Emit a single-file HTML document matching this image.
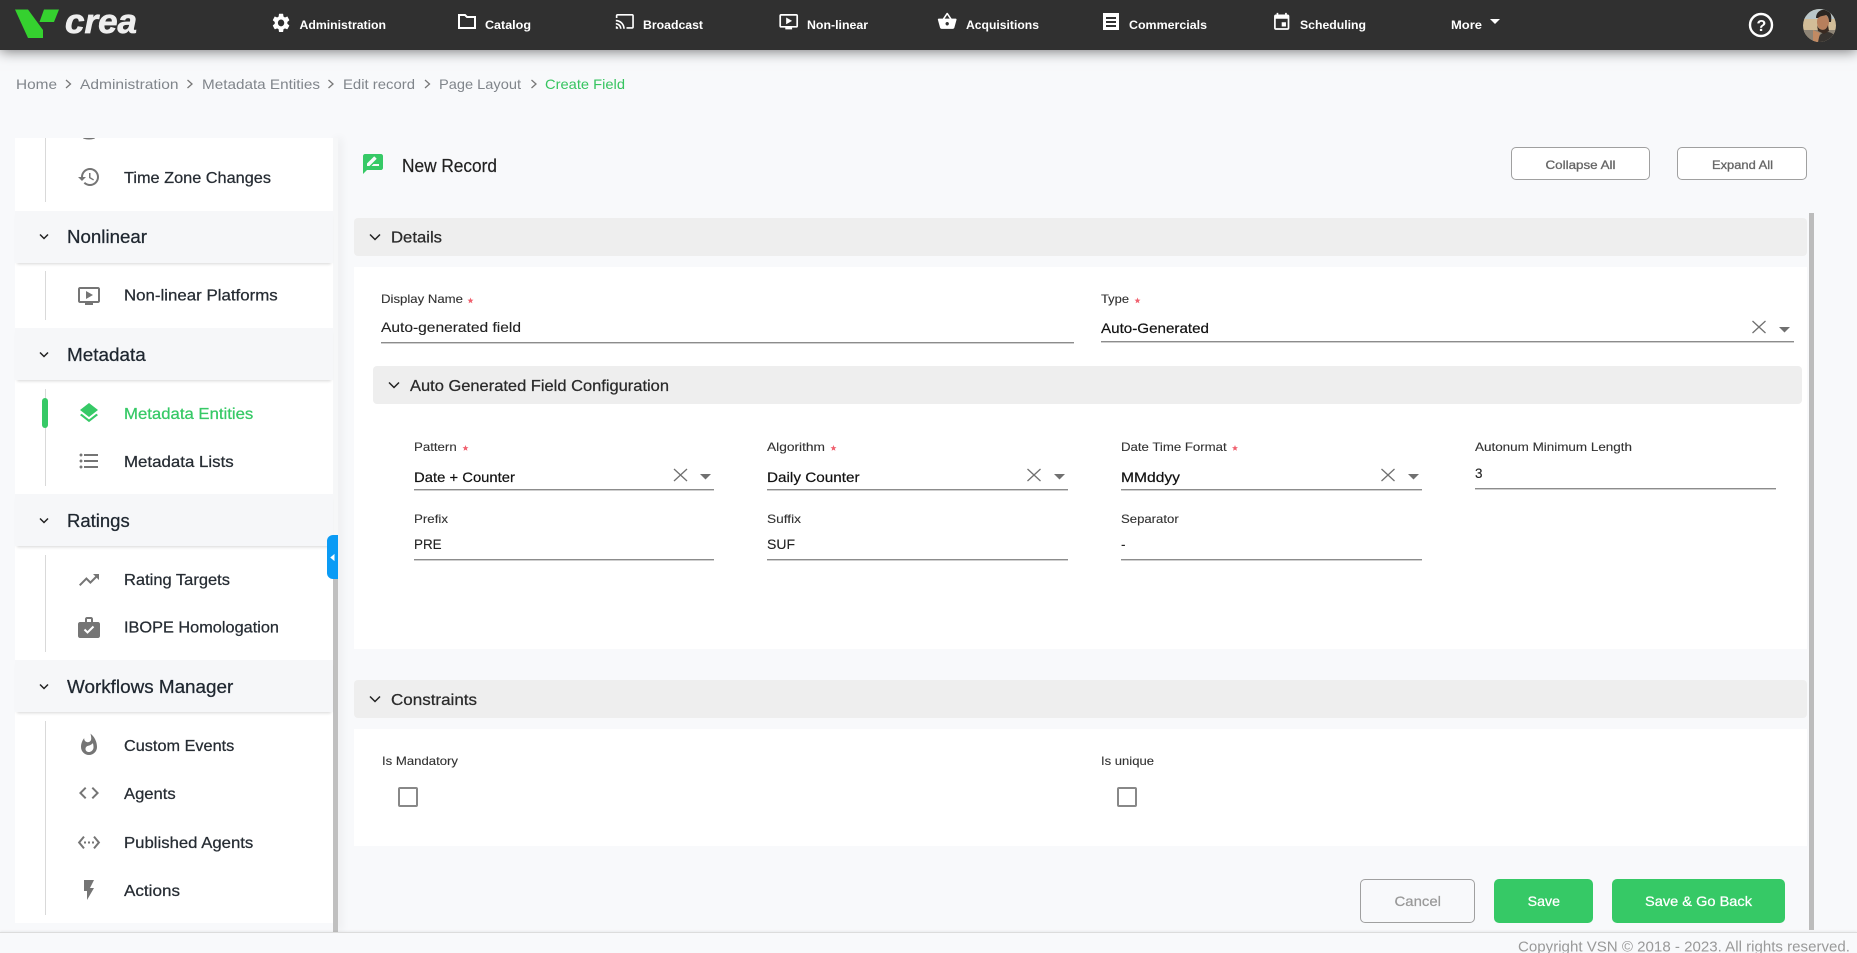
<!DOCTYPE html>
<html lang="en"><head><meta charset="utf-8"><title>New Record</title>
<style>
html,body{margin:0;padding:0;width:1857px;height:953px;overflow:hidden;background:#f8f9fb;font-family:"Liberation Sans",sans-serif}
.b{position:absolute;box-sizing:border-box}
.hdr{left:0;top:0;width:1857px;height:50px;background:#303030;box-shadow:0 1px 13px rgba(0,0,0,.55)}
.side{left:15px;top:138px;width:318px;height:794px;background:#fff;overflow:hidden}
.track{left:333px;top:138px;width:5px;height:794px;background:#f6f7f8;box-shadow:3px 0 9px rgba(0,0,0,.07)}
.g{left:15px;width:318px;height:52px;background:#f6f7f9;box-shadow:0 3px 3px -2px rgba(0,0,0,.16)}
.v{left:45px;width:1px;background:#d9d9d9}
.sh{background:#eee;border-radius:4px}
.w{background:#fff}
.u{height:2px;background:#8c8c8c;border-bottom:1px solid #cfcfcf}
.cb{width:20px;height:20px;border:2px solid #888;border-radius:2px;background:#fff}
.ob{height:33px;border:1px solid #a0a0a0;border-radius:5px;background:#fff}
.gb{top:879px;height:44px;background:#36c966;border-radius:5px}
svg{position:absolute;left:0;top:0}
text{font-family:"Liberation Sans",sans-serif}
.n{font-size:12px;font-weight:700;fill:#fff}
.bc{font-size:14px;fill:#80858b}
.i{font-size:16px;fill:#262c33;stroke:#262c33;stroke-width:.25}
.h{font-size:18px;fill:#1f2730;stroke:#1f2730;stroke-width:.25}
.t{font-size:16px;fill:#2a2a2a;stroke:#2a2a2a;stroke-width:.25}
.l{font-size:12px;fill:#333;stroke:#333;stroke-width:.12}
.f{font-size:14px;fill:#222;stroke:#222;stroke-width:.12}
.s{font-size:14px;fill:#111;stroke:#111;stroke-width:.2}
.ic{fill:#757575}
</style></head><body>
<div class="b hdr"></div>

<div class="b track"></div>
<div class="b side"></div>
<div class="b" style="left:333px;top:536px;width:5px;height:396px;background:#c0c0c0"></div>
<div class="b v" style="top:138px;height:64px"></div>
<div class="b g" style="top:211px"></div>
<div class="b v" style="top:271px;height:49px"></div>
<div class="b g" style="top:328px"></div>
<div class="b v" style="top:389px;height:97px"></div>
<div class="b" style="left:42px;top:398px;width:6px;height:30px;border-radius:3px;background:#36c966"></div>
<div class="b g" style="top:494px"></div>
<div class="b v" style="top:555px;height:97px"></div>
<div class="b g" style="top:660px"></div>
<div class="b v" style="top:721px;height:194px"></div>
<div class="b" style="left:15px;top:923px;width:318px;height:9px;background:#f8f9fb"></div>
<div class="b" style="left:327px;top:535px;width:11px;height:44px;background:#0a9bf5;border-radius:6px 0 0 6px"></div>

<div class="b ob" style="left:1511px;top:147px;width:139px"></div>
<div class="b ob" style="left:1677px;top:147px;width:130px"></div>

<div class="b" style="left:1809px;top:213px;width:5px;height:717px;background:#bcbcbc"></div>
<div class="b sh" style="left:354px;top:218px;width:1453px;height:38px"></div>
<div class="b w" style="left:354px;top:267px;width:1453px;height:382px"></div>
<div class="b sh" style="left:373px;top:366px;width:1429px;height:38px"></div>
<div class="b sh" style="left:354px;top:680px;width:1453px;height:38px"></div>
<div class="b w" style="left:354px;top:729px;width:1453px;height:117px"></div>

<div class="b u" style="left:381px;top:342px;width:693px"></div>
<div class="b u" style="left:1101px;top:341px;width:693px"></div>
<div class="b u" style="left:414px;top:489px;width:300px"></div>
<div class="b u" style="left:767px;top:489px;width:301px"></div>
<div class="b u" style="left:1121px;top:489px;width:301px"></div>
<div class="b u" style="left:1475px;top:488px;width:301px"></div>
<div class="b u" style="left:414px;top:559px;width:300px"></div>
<div class="b u" style="left:767px;top:559px;width:301px"></div>
<div class="b u" style="left:1121px;top:559px;width:301px"></div>

<div class="b cb" style="left:398px;top:787px"></div>
<div class="b cb" style="left:1117px;top:787px"></div>

<div class="b ob" style="left:1360px;top:879px;width:115px;height:44px;background:#f8f9fb"></div>
<div class="b gb" style="left:1494px;width:99px"></div>
<div class="b gb" style="left:1612px;width:173px"></div>

<div class="b" style="left:0;top:932px;width:1857px;height:21px;background:#f8f9fb;border-top:1px solid #dcdcdc;box-shadow:0 -1px 2px rgba(0,0,0,.06)"></div>

<svg width="1857" height="953" viewBox="0 0 1857 953" xmlns="http://www.w3.org/2000/svg">
<!-- logo -->
<path d="M15 9.500H28L43 30V38H28Z" fill="#35d12f"/>
<path d="M44 9.500H59L54 22H39.500Z" fill="#35d12f"/>
<text x="65" y="33" font-size="34" font-weight="700" font-style="italic" fill="#eeeeee" stroke="#eeeeee" stroke-width=".7" textLength="72" lengthAdjust="spacingAndGlyphs">crea</text>

<!-- nav icons -->
<g fill="#fff">
<path transform="translate(270.500 11.500) scale(.88 .95)" d="M19.14 12.94c.04-.3.06-.61.06-.94 0-.32-.02-.64-.07-.94l2.03-1.58c.18-.14.23-.41.12-.61l-1.92-3.32c-.12-.22-.37-.29-.59-.22l-2.39.96c-.5-.38-1.03-.7-1.62-.94l-.36-2.54c-.04-.24-.24-.41-.48-.41h-3.84c-.24 0-.43.17-.47.41l-.36 2.54c-.59.24-1.13.57-1.62.94l-2.39-.96c-.22-.08-.47 0-.59.22L2.74 8.87c-.12.21-.08.47.12.61l2.03 1.58c-.05.3-.09.63-.09.94s.02.64.07.94l-2.03 1.58c-.18.14-.23.41-.12.61l1.92 3.32c.12.22.37.29.59.22l2.39-.96c.5.38 1.03.7 1.62.94l.36 2.54c.05.24.24.41.48.41h3.84c.24 0 .44-.17.47-.41l.36-2.54c.59-.24 1.13-.56 1.62-.94l2.39.96c.22.08.47 0 .59-.22l1.92-3.32c.12-.22.07-.47-.12-.61l-2.01-1.58zM12 15.6c-1.98 0-3.6-1.62-3.6-3.6s1.62-3.6 3.6-3.6 3.6 1.62 3.6 3.6-1.62 3.6-3.6 3.6z"/>
<path d="M459 15h6l2 2h8v11h-16z" fill="none" stroke="#fff" stroke-width="2"/>
<path transform="translate(615 11.500) scale(.82)" d="M21 3H3c-1.100 0-2 .9-2 2v3h2V5h18v14h-7v2h7c1.100 0 2-.9 2-2V5c0-1.100-.9-2-2-2zM1 18v3h3c0-1.660-1.340-3-3-3zm0-4v2c2.760 0 5 2.240 5 5h2c0-3.870-3.130-7-7-7zm0-4v2c4.970 0 9 4.030 9 9h2c0-6.080-4.930-11-11-11z"/>
<path transform="translate(778.500 11.500) scale(.85)" d="M21 3H3c-1.110 0-2 .89-2 2v12c0 1.100.89 2 2 2h5v2h8v-2h5c1.100 0 1.990-.9 1.990-2L23 5c0-1.110-.9-2-2-2zm0 14H3V5h18v12zm-5-6l-7 4V7z"/>
<path transform="translate(937 11) scale(.85)" d="M17.210 9l-4.380-6.560c-.19-.28-.51-.42-.83-.42-.32 0-.64.14-.83.43L6.790 9H2c-.55 0-1 .45-1 1 0 .09.01.18.04.27l2.540 9.270c.23.84 1 1.460 1.920 1.460h13c.92 0 1.690-.62 1.930-1.460l2.540-9.270L23 10c0-.55-.45-1-1-1h-4.790zM9 9l3-4.400L15 9H9zm3 8c-1.100 0-2-.9-2-2s.9-2 2-2 2 .9 2 2-.9 2-2 2z"/>
<path d="M1103 13h16v17h-16zM1106 17v2h10v-2zM1106 21v2h10v-2zM1106 25v2h10v-2z" fill-rule="evenodd"/>
<path transform="translate(1271.500 12) scale(.85)" d="M17 12h-5v5h5v-5zM16 1v2H8V1H6v2H5c-1.110 0-1.990.9-1.990 2L3 19c0 1.100.89 2 2 2h14c1.100 0 2-.9 2-2V5c0-1.100-.9-2-2-2h-1V1h-2zm3 18H5V8h14v11z"/>
<path d="M1490 19h10l-5 5z"/>
</g>
<text class="n" x="299.500" y="29" textLength="86.500" lengthAdjust="spacingAndGlyphs">Administration</text>
<text class="n" x="485" y="29" textLength="46" lengthAdjust="spacingAndGlyphs">Catalog</text>
<text class="n" x="643" y="29" textLength="60" lengthAdjust="spacingAndGlyphs">Broadcast</text>
<text class="n" x="807" y="29" textLength="61" lengthAdjust="spacingAndGlyphs">Non-linear</text>
<text class="n" x="966" y="29" textLength="73" lengthAdjust="spacingAndGlyphs">Acquisitions</text>
<text class="n" x="1129" y="29" textLength="78" lengthAdjust="spacingAndGlyphs">Commercials</text>
<text class="n" x="1300" y="29" textLength="66" lengthAdjust="spacingAndGlyphs">Scheduling</text>
<text class="n" x="1451" y="29" textLength="31" lengthAdjust="spacingAndGlyphs">More</text>

<!-- help -->
<circle cx="1761" cy="25" r="11" fill="none" stroke="#fff" stroke-width="2.400"/>
<text x="1756.500" y="31" font-size="16" font-weight="700" fill="#fff">?</text>

<!-- avatar -->
<clipPath id="av"><circle cx="1819.500" cy="25.500" r="16.500"/></clipPath>
<g clip-path="url(#av)">
<rect x="1803" y="9" width="33" height="33" fill="#d2bd98"/>
<rect x="1803" y="9" width="33" height="10" fill="#b9c6c9"/>
<rect x="1803" y="30" width="33" height="12" fill="#8d8476"/>
<path d="M1818 42c0-7 4-10 9-10s9 3 9 10z" fill="#37332f"/>
<ellipse cx="1823" cy="22" rx="6" ry="8" fill="#b77f5c"/>
<path d="M1816 18c0-6 5-9 10-8 5 1 6 6 5 12l-2 0c0-3-1-6-3-7-3 1-6 1-8 3z" fill="#2b2521"/>
<path d="M1817 25c2 6 9 7 11 0l1 6-5 3-6-3z" fill="#3a2b22"/>
<path d="M1813 30l7 3-2 9h-5z" fill="#c18a63"/>
</g>

<!-- breadcrumb -->
<text class="bc" x="16" y="89" textLength="41" lengthAdjust="spacingAndGlyphs">Home</text>
<text class="bc" x="80" y="89" textLength="98.500" lengthAdjust="spacingAndGlyphs">Administration</text>
<text class="bc" x="202" y="89" textLength="118" lengthAdjust="spacingAndGlyphs">Metadata Entities</text>
<text class="bc" x="343" y="89" textLength="72" lengthAdjust="spacingAndGlyphs">Edit record</text>
<text class="bc" x="439" y="89" textLength="82" lengthAdjust="spacingAndGlyphs">Page Layout</text>
<text x="545" y="89" font-size="14" fill="#36c45f" textLength="80" lengthAdjust="spacingAndGlyphs">Create Field</text>
<g fill="none" stroke="#777" stroke-width="1.300">
<path d="M66 80l4.500 4-4.500 4"/><path d="M187.500 80l4.500 4-4.500 4"/><path d="M328.500 80l4.500 4-4.500 4"/><path d="M425 80l4.500 4-4.500 4"/><path d="M531.500 80l4.500 4-4.500 4"/>
</g>

<!-- sidebar icons -->
<g class="ic">
<path d="M83 138a6 1.500 0 0 0 12 0z"/>
<path transform="translate(77 165)" d="M13 3c-4.970 0-9 4.030-9 9H1l3.890 3.890.07.14L9 12H6c0-3.870 3.130-7 7-7s7 3.130 7 7-3.130 7-7 7c-1.930 0-3.680-.79-4.940-2.060l-1.420 1.420C8.270 19.990 10.510 21 13 21c4.970 0 9-4.030 9-9s-4.030-9-9-9zm-1 5v5l4.280 2.540.72-1.210-3.500-2.080V8H12z"/>
<path transform="translate(77 284)" d="M21 3H3c-1.110 0-2 .89-2 2v12c0 1.100.89 2 2 2h5v2h8v-2h5c1.100 0 1.990-.9 1.990-2L23 5c0-1.110-.9-2-2-2zm0 14H3V5h18v12zm-5-6l-7 4V7z"/>
<path transform="translate(77 401)" fill="#36c966" d="M11.990 18.540l-7.370-5.730L3 14.070l9 7 9-7-1.630-1.270-7.380 5.740zM12 16l7.360-5.730L21 9l-9-7-9 7 1.630 1.270L12 16z"/>
<path transform="translate(77 449)" d="M4 10.500c-.83 0-1.500.67-1.500 1.500s.67 1.500 1.500 1.500 1.500-.67 1.500-1.500-.67-1.500-1.500-1.500zm0-6c-.83 0-1.500.67-1.500 1.500S3.170 7.500 4 7.500 5.500 6.830 5.500 6 4.830 4.500 4 4.500zm0 12c-.83 0-1.500.68-1.500 1.500s.68 1.500 1.500 1.500 1.500-.68 1.500-1.500-.67-1.500-1.500-1.500zM7 19h14v-2H7v2zm0-6h14v-2H7v2zm0-8v2h14V5H7z"/>
<path transform="translate(77 568)" d="M16 6l2.290 2.290-4.880 4.880-4-4L2 16.590 3.410 18l6-6 4 4 6.300-6.290L22 12V6z"/>
<path d="M85 622v-3c0-1.100.9-2 2-2h4c1.100 0 2 .9 2 2v3h5c1.100 0 2 .9 2 2v12c0 1.100-.9 2-2 2H80c-1.100 0-2-.9-2-2v-12c0-1.100.9-2 2-2zm2 0h4v-3h-4z" fill-rule="evenodd"/>
<path d="M84.500 629.500l3 3 6-6" fill="none" stroke="#fff" stroke-width="2"/>
<path transform="translate(77 733)" d="M13.500.67s.74 2.650.74 4.800c0 2.060-1.350 3.730-3.410 3.730-2.070 0-3.630-1.670-3.630-3.730l.03-.36C5.210 7.510 4 10.620 4 14c0 4.420 3.580 8 8 8s8-3.580 8-8C20 8.610 17.410 3.800 13.500.67zM11.710 19c-1.780 0-3.220-1.400-3.220-3.140 0-1.620 1.050-2.760 2.810-3.120 1.770-.36 3.600-1.210 4.620-2.580.39 1.290.59 2.650.59 4.040 0 2.650-2.150 4.800-4.800 4.800z"/>
<path transform="translate(77 781)" d="M9.400 16.600L4.800 12l4.600-4.600L8 6l-6 6 6 6 1.400-1.400zm5.200 0l4.600-4.600-4.600-4.600L16 6l6 6-6 6-1.400-1.400z"/>
<path transform="translate(77 830.500)" d="M7.770 6.760L6.230 5.480.82 12l5.410 6.520 1.540-1.280L3.420 12l4.350-5.240zM7 13h2v-2H7v2zm10-2h-2v2h2v-2zm-6 2h2v-2h-2v2zm6.770-7.520l-1.540 1.280L20.580 12l-4.350 5.240 1.540 1.280L23.180 12l-5.410-6.520z"/>
<path transform="translate(77 878)" d="M7 2v11h3v9l7-12h-4l4-8z"/>
</g>
<path d="M334 555l-3 2.500 3 2.500z" fill="#fff" stroke="#fff"/>

<!-- sidebar group chevrons -->
<g fill="none" stroke="#222" stroke-width="1.500">
<path d="M40 234.500l4 4 4-4"/><path d="M40 352.500l4 4 4-4"/><path d="M40 518.500l4 4 4-4"/><path d="M40 684.500l4 4 4-4"/>
</g>
<text class="h" x="67" y="243" textLength="80" lengthAdjust="spacingAndGlyphs">Nonlinear</text>
<text class="h" x="67" y="361" textLength="78.700" lengthAdjust="spacingAndGlyphs">Metadata</text>
<text class="h" x="67" y="527" textLength="62.700" lengthAdjust="spacingAndGlyphs">Ratings</text>
<text class="h" x="67" y="693" textLength="166.300" lengthAdjust="spacingAndGlyphs">Workflows Manager</text>

<text class="i" x="124" y="183" textLength="147" lengthAdjust="spacingAndGlyphs">Time Zone Changes</text>
<text class="i" x="124" y="300.500" textLength="153.700" lengthAdjust="spacingAndGlyphs">Non-linear Platforms</text>
<text class="i" x="124" y="419" textLength="129.300" lengthAdjust="spacingAndGlyphs" style="fill:#36c966;stroke:#36c966">Metadata Entities</text>
<text class="i" x="124" y="467" textLength="109.700" lengthAdjust="spacingAndGlyphs">Metadata Lists</text>
<text class="i" x="124" y="585" textLength="106" lengthAdjust="spacingAndGlyphs">Rating Targets</text>
<text class="i" x="124" y="632.500" textLength="155" lengthAdjust="spacingAndGlyphs">IBOPE Homologation</text>
<text class="i" x="124" y="751" textLength="110.300" lengthAdjust="spacingAndGlyphs">Custom Events</text>
<text class="i" x="124" y="799" textLength="51.700" lengthAdjust="spacingAndGlyphs">Agents</text>
<text class="i" x="124" y="848" textLength="129.300" lengthAdjust="spacingAndGlyphs">Published Agents</text>
<text class="i" x="124" y="896" textLength="56" lengthAdjust="spacingAndGlyphs">Actions</text>

<!-- page title -->
<path transform="translate(361 152)" fill="#36c966" d="M20 2H4c-1.100 0-1.990.9-1.990 2L2 22l4-4h14c1.100 0 2-.9 2-2V4c0-1.100-.9-2-2-2zM6 14v-2.470l6.880-6.880c.2-.2.51-.2.71 0l1.770 1.770c.2.2.2.51 0 .71L8.470 14H6zm12 0h-7.500l2-2H18v2z"/>
<text x="402" y="172" font-size="18" fill="#222" stroke="#222" stroke-width=".2" textLength="95" lengthAdjust="spacingAndGlyphs">New Record</text>
<g font-size="12" fill="#666" stroke="#666" stroke-width=".3">
<text x="1545.500" y="169" textLength="70" lengthAdjust="spacingAndGlyphs">Collapse All</text>
<text x="1712" y="169" textLength="61" lengthAdjust="spacingAndGlyphs">Expand All</text>
</g>

<!-- section headers -->
<g fill="none" stroke="#222" stroke-width="1.500">
<path d="M370 234.500l5 5 5-5"/><path d="M389 382.500l5 5 5-5"/><path d="M370 696.500l5 5 5-5"/>
</g>
<text class="t" x="391" y="242.500" textLength="51" lengthAdjust="spacingAndGlyphs">Details</text>
<text class="t" x="410" y="391" textLength="259" lengthAdjust="spacingAndGlyphs">Auto Generated Field Configuration</text>
<text class="t" x="391" y="705" textLength="86" lengthAdjust="spacingAndGlyphs">Constraints</text>

<!-- labels -->
<text class="l" x="381" y="303" textLength="82" lengthAdjust="spacingAndGlyphs">Display Name</text>
<text class="l" x="1101" y="303" textLength="28" lengthAdjust="spacingAndGlyphs">Type</text>
<text class="l" x="414" y="451" textLength="42.700" lengthAdjust="spacingAndGlyphs">Pattern</text>
<text class="l" x="767" y="451" textLength="58" lengthAdjust="spacingAndGlyphs">Algorithm</text>
<text class="l" x="1121" y="451" textLength="105.700" lengthAdjust="spacingAndGlyphs">Date Time Format</text>
<text class="l" x="1475" y="451" textLength="157" lengthAdjust="spacingAndGlyphs">Autonum Minimum Length</text>
<text class="l" x="414" y="523" textLength="34" lengthAdjust="spacingAndGlyphs">Prefix</text>
<text class="l" x="767" y="523" textLength="34" lengthAdjust="spacingAndGlyphs">Suffix</text>
<text class="l" x="1121" y="523" textLength="57.700" lengthAdjust="spacingAndGlyphs">Separator</text>
<text class="l" x="382" y="765" textLength="76" lengthAdjust="spacingAndGlyphs">Is Mandatory</text>
<text class="l" x="1101" y="765" textLength="53" lengthAdjust="spacingAndGlyphs">Is unique</text>

<!-- stars -->
<g fill="#f0606e">
<path transform="translate(470.500 300.500)" id="st" d="M0-3l.8 2.100 2.200.1-1.700 1.400.6 2.200L0 1.600-1.900 2.800l.6-2.200L-3-.8l2.200-.1z"/>
<use href="#st" x="667" y="0"/>
<use href="#st" x="-5" y="147.500"/>
<use href="#st" x="363" y="147.500"/>
<use href="#st" x="764.500" y="147.500"/>
</g>

<!-- values -->
<text class="f" x="381" y="332" textLength="140" lengthAdjust="spacingAndGlyphs">Auto-generated field</text>
<text class="s" x="1101" y="333" textLength="108" lengthAdjust="spacingAndGlyphs">Auto-Generated</text>
<text class="s" x="414" y="482" textLength="101" lengthAdjust="spacingAndGlyphs">Date + Counter</text>
<text class="s" x="767" y="482" textLength="92.600" lengthAdjust="spacingAndGlyphs">Daily Counter</text>
<text class="s" x="1121" y="482" textLength="59" lengthAdjust="spacingAndGlyphs">MMddyy</text>
<text class="f" x="1475" y="478" textLength="7.500" lengthAdjust="spacingAndGlyphs">3</text>
<text class="f" x="414" y="549" textLength="27.600" lengthAdjust="spacingAndGlyphs">PRE</text>
<text class="f" x="767" y="549" textLength="28" lengthAdjust="spacingAndGlyphs">SUF</text>
<text class="f" x="1121" y="549" textLength="4.500" lengthAdjust="spacingAndGlyphs">-</text>

<!-- clear / caret -->
<g fill="none" stroke="#707070" stroke-width="1.300">
<path d="M1752.500 321l13 12M1765.500 321l-13 12"/>
<path d="M674 469l13 12M687 469l-13 12"/>
<path d="M1027.500 469l13 12M1040.500 469l-13 12"/>
<path d="M1381.500 469l13 12M1394.500 469l-13 12"/>
</g>
<g fill="#707070">
<path d="M1779 327h11l-5.500 5.500z"/>
<path d="M700 474h11l-5.500 5.500z"/>
<path d="M1054 474h11l-5.500 5.500z"/>
<path d="M1408 474h11l-5.500 5.500z"/>
</g>

<!-- action buttons -->
<g font-size="14" stroke-width=".25">
<text x="1394.500" y="906" fill="#999" stroke="#999" textLength="46.500" lengthAdjust="spacingAndGlyphs">Cancel</text>
<text x="1527.700" y="906" fill="#fff" stroke="#fff" textLength="32.300" lengthAdjust="spacingAndGlyphs">Save</text>
<text x="1645" y="906" fill="#fff" stroke="#fff" textLength="107" lengthAdjust="spacingAndGlyphs">Save &amp; Go Back</text>
</g>

<!-- footer -->
<text x="1518" y="951.500" font-size="15" fill="#999" textLength="332" lengthAdjust="spacingAndGlyphs">Copyright VSN © 2018 - 2023. All rights reserved.</text>
</svg>
</body></html>
